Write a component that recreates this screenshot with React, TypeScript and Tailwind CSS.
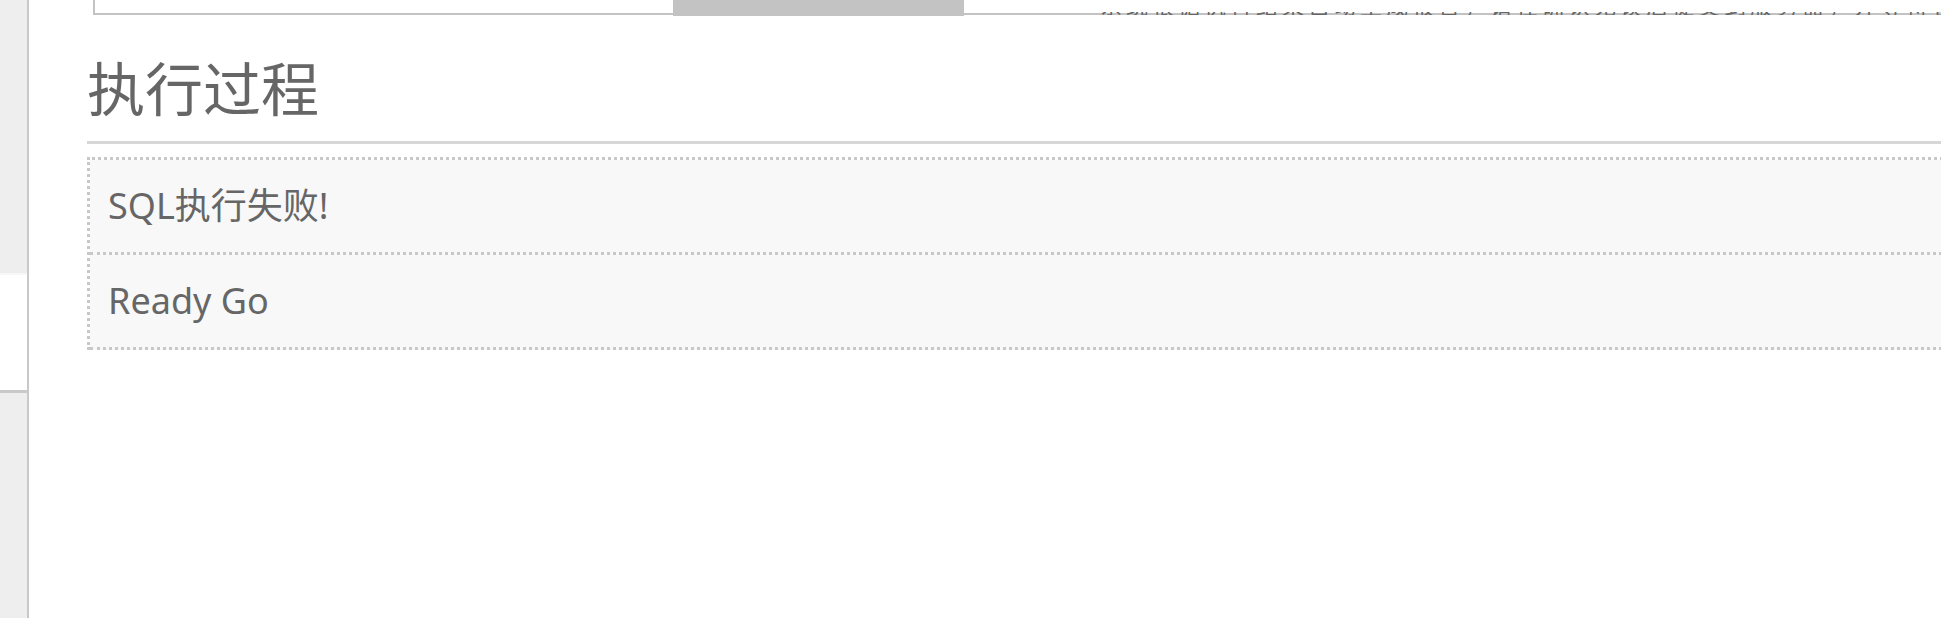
import React from "react";

const rows = ["SQL执行失败!", "Ready Go"];

// bottoms of an overflowing line of text peek over the top strip
const cutText =
  "系统根据执行结果自动生成报告，请在确认无误后提交到服务器，并等待管理员审核处理完成后再继续下一步操作";

export default function App() {
  return (
    <div
      className="flex w-[1941px] h-[618px] overflow-hidden bg-white"
      style={{ fontFamily: "'Noto Sans', 'Noto Sans CJK SC', sans-serif" }}
    >
      {/* sidebar */}
      <div className="w-[29px] shrink-0 flex flex-col border-r-2 border-[#c9c9c9]">
        <div className="h-[273px] bg-[#eeeeee]" />
        <div className="h-[2px] bg-[#f7f7f7]" />
        <div className="h-[115px] bg-white" />
        <div className="h-[3px] bg-[#c9c9c9]" />
        <div className="flex-1 bg-[#eeeeee]" />
      </div>

      <div className="flex-1 min-w-0 overflow-hidden">
        <div className="w-[2100px]">
          {/* top strip: end of the box above */}
          <div className="ml-[64px] h-[15px] border-l-2 border-b-2 border-[#c3c3c3] relative">
            <div className="absolute left-[578px] top-0 h-[16px] w-[291px] bg-[#c3c3c3]" />
            <div className="absolute left-[1005px] top-[12px] h-[3px] w-[900px] overflow-hidden">
              <div className="-mt-[18px] text-[22px] leading-[22px] tracking-[4px] text-[#666] whitespace-nowrap">
                {cutText}
              </div>
            </div>
          </div>

          <div className="ml-[58px]">
            <h1
              className="mt-[41px] pb-[25px] border-b-[3px] border-[#d6d6d6] text-[58px] leading-[60px] text-[#666] font-normal"
              style={{ fontFamily: "'Noto Sans CJK SC', sans-serif" }}
            >
              执行过程
            </h1>

            <div className="mt-[13px] border-t-[3px] border-l-[3px] border-dotted border-[#c8c8c8]">
              {rows.map((r) => (
                <div
                  key={r}
                  className="h-[95px] flex items-center pl-[18px] bg-[#f8f8f8] border-b-[3px] border-dotted border-[#c8c8c8] text-[36px] text-[#666]"
                >
                  {r}
                </div>
              ))}
            </div>
          </div>
        </div>
      </div>
    </div>
  );
}
